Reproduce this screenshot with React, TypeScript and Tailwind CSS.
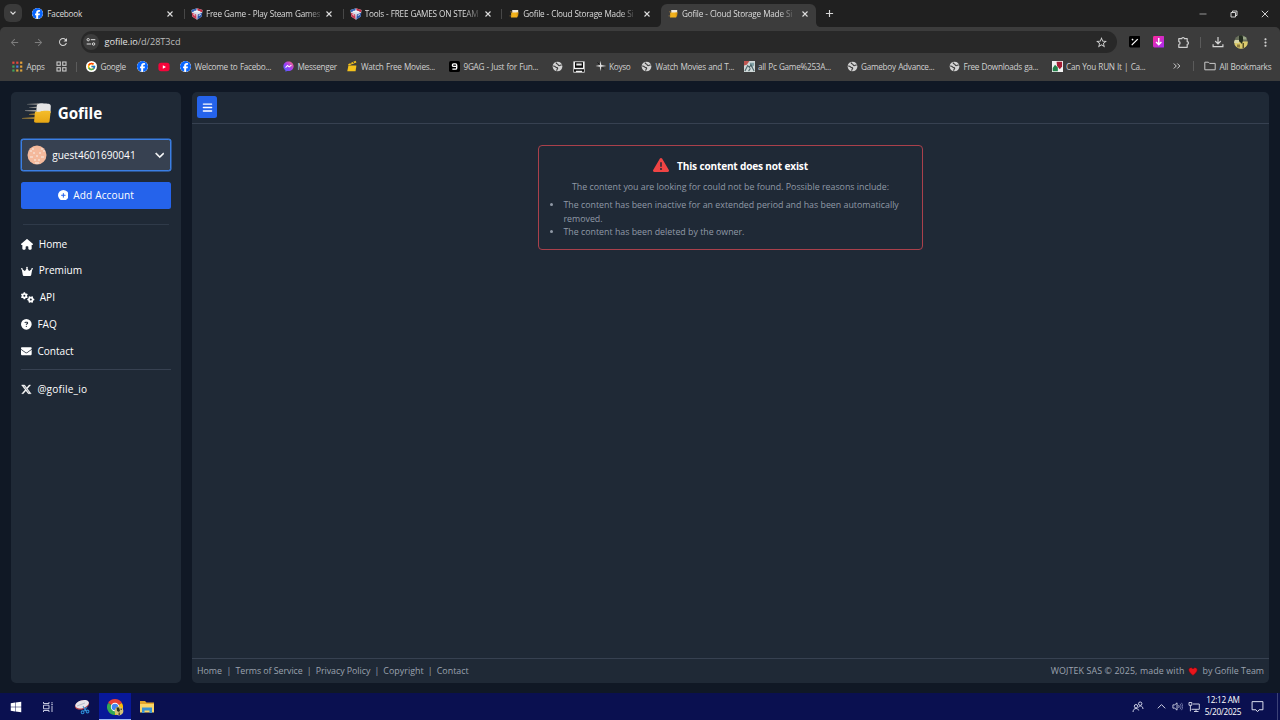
import React from "react";
import {
  FaHouse, FaCrown, FaGears, FaCircleQuestion, FaEnvelope, FaXTwitter, FaCirclePlus,
  FaBars, FaTriangleExclamation, FaChevronDown, FaFacebook, FaWindows,
} from "react-icons/fa6";
import { FcGoogle } from "react-icons/fc";
import { MdArrowBack, MdArrowForward, MdRefresh, MdStarBorder, MdMoreVert } from "react-icons/md";

const Facebook = () => <FaFacebook className="size-[11px] rounded-full bg-white text-[#0866ff]" />;

const Shield = () => (
  <svg viewBox="0 0 12 12" className="size-[12px]">
    <path d="M.5 2 6 .3 11.500 2 10.700 8.600 6 11.800 1.300 8.600Z" fill="#d8ddea" />
    <path d="M.5 2 6 .3 5 2.600 1 4.200Z" fill="#2f62b8" />
    <path d="M6 .3 11.500 2 11 4.200 6.800 2.600Z" fill="#c62b42" />
    <path d="M.8 4.800 5.200 6.400 5.600 11.500 1.300 8.600Z" fill="#c83a55" />
    <path d="M11.200 4.800 6.800 6.400 6.400 11.500 10.700 8.600Z" fill="#2855a8" />
    <path d="M2.500 6.500 4.200 7.200M7.800 7.400 9.800 6.500M3 3.300 9 3.900" fill="none" stroke="#f4f6fa" strokeWidth="1" />
  </svg>
);

const Mug = () => (
  <svg viewBox="0 0 12 12" className="size-[12px]">
    <path d="M4.200 2h6v3h-6z" fill="#f0e9da" />
    <path d="M3.200 4.600h6.600l-.6 5H3Z" fill="#f2b21b" />
    <path d="M8.600 4.600h2L10 8.400H8.800z" fill="#dc9912" />
    <path d="M1.500 7.900h2.200M2 3.800h2.400" stroke="#b78a3e" strokeWidth=".6" />
  </svg>
);

const Globe = () => (
  <svg viewBox="0 0 12 12" className="size-[11px]">
    <circle cx="6" cy="6" r="5.300" fill="#d2d2d2" />
    <path d="M1.200 5.400c1.400 0 2.200.4 3 1.300.7.8 1.800.3 2 1.200.1.9-1.200 1.100-1.100 2.700M4.600 1.600c-.3 1.400.6 1.500 1.300 1.700 1 .3.500 1.700 1.800 1.800 1.400.1 1.400-1 2.900-.6" fill="none" stroke="#3c3c3c" strokeWidth="1.200" />
  </svg>
);

const AppsGrid = () => {
  const colors = ["#e5493d", "#e5493d", "#e8a33b", "#3fa45b", "#4a7fe0", "#e8a33b", "#3fa45b", "#d9a33c", "#d9a33c"];
  return (
    <svg viewBox="0 0 11 11" className="size-[11px]">
      {colors.map((c, i) => (
        <rect key={i} x={0.3 + (i % 3) * 3.9} y={0.6 + Math.floor(i / 3) * 3.9} width="2.200" height="2.200" fill={c} />
      ))}
    </svg>
  );
};

const FourSquares = () => (
  <svg viewBox="0 0 11 11" className="size-[11px]" fill="none" stroke="#c9c9c9" strokeWidth="1.100">
    <rect x="1" y="1" width="3.300" height="3.300" /><rect x="6.700" y="1" width="3.300" height="3.300" />
    <rect x="1" y="6.700" width="3.300" height="3.300" /><rect x="6.700" y="6.700" width="3.300" height="3.300" />
  </svg>
);

const YouTube = () => (
  <svg viewBox="0 0 12 12" className="size-[12px]">
    <rect x=".4" y="1.800" width="11.200" height="8.400" rx="2.600" fill="#f5043a" />
    <path d="M4.800 4.300 8 6 4.800 7.700Z" fill="#fff" />
  </svg>
);

const Messenger = () => (
  <svg viewBox="0 0 12 12" className="size-[11px]">
    <defs>
      <linearGradient id="msg" x1="0" y1="1" x2="1" y2="0">
        <stop offset="0" stopColor="#3b6dff" /><stop offset=".5" stopColor="#a13bf5" /><stop offset="1" stopColor="#ff6a6f" />
      </linearGradient>
    </defs>
    <path d="M6 .6c3.200 0 5.600 2.300 5.600 5.200S9.200 11 6 11c-.6 0-1.100 0-1.600-.2l-1.700.8-.1-1.500C1.200 9.200.4 7.700.4 5.800.4 2.900 2.800.6 6 .6Z" fill="url(#msg)" />
    <path d="M2.800 7.200 4.900 4.900 6.700 6.400 9.200 4.500" fill="none" stroke="#fff" strokeWidth="1.100" />
  </svg>
);

const Clapper = () => (
  <svg viewBox="0 0 12 12" className="size-[12px]">
    <path d="M1.400 5.500h8l-.8 5.800H.3Z" fill="#f4c21c" />
    <path d="m1 4.200 7.600-3.400.8 1.800L1.800 5.400Z" fill="#f4c21c" />
    <path d="m3.300 3.100 1.300 1M5.900 2l1.300 1" stroke="#3c3c3c" strokeWidth=".8" />
  </svg>
);

const NineGag = () => (
  <svg viewBox="0 0 12 12" className="size-[11px]">
    <rect width="12" height="12" rx="2" fill="#000" />
    <path d="M8.400 5.900H5.300C4 5.900 3.700 5.300 3.700 4.500c0-.9.6-1.300 1.400-1.300h2c.8 0 1.300.4 1.300 1.300v3.100c0 .9-.5 1.300-1.300 1.300H3.700" fill="none" stroke="#fff" strokeWidth="1.500" />
  </svg>
);

const Cabinet = () => (
  <svg viewBox="0 0 12 12" className="size-[12px]">
    <rect x=".4" y=".4" width="11.200" height="11.200" fill="#f4f4f4" />
    <path d="M2 1.200h8v5.600H2Z" fill="#0a0a0a" /><path d="M3.300 2.500h5.400v2H3.300Z" fill="#e8e8e8" />
    <path d="M1 8.300h10v1.500H1ZM1 9.500h2v1.200H1ZM9 9.500h2v1.200H9Z" fill="#0a0a0a" />
  </svg>
);

const Spark = () => (
  <svg viewBox="0 0 12 12" className="size-[12px]">
    <path d="M5.600.8 6.300 5l5.100.9-5.100.8-.7 4.500-.8-4.500L.6 6l4.200-1Z" fill="#e0e0e0" />
    <path d="m2.500 2.500 2 2M7 7.500l1.800 1.800" stroke="#161616" strokeWidth="1" />
  </svg>
);

const PcPicture = () => (
  <svg viewBox="0 0 12 12" className="size-[11px]">
    <rect width="12" height="12" fill="#cfd8d8" />
    <path d="M0 0h6L3 4 0 5z" fill="#bd5550" /><path d="M6 2h5v3l-3 2z" fill="#7fa0a5" />
    <path d="m1 11 3-6 2 2 1.500-3L11 11M5 11l2-3" fill="none" stroke="#4c6468" strokeWidth="1.200" />
  </svg>
);

const CanRun = () => (
  <svg viewBox="0 0 12 12" className="size-[11px]">
    <rect width="12" height="12" fill="#f2f2f2" />
    <path d="M.8 11.200V7.500l2.500-3.500L6.400 7v4.200Z" fill="#23814a" />
    <path d="M5 .8h6V6L8.500 9 5.500 5.500Z" fill="#a31d35" />
  </svg>
);

const Folder = () => (
  <svg viewBox="0 0 12 12" className="size-[12px]" fill="none" stroke="#c9c9c9" strokeWidth="1">
    <path d="M.8 2.200h3.600l1.200 1.200h5.600v6.400H.8Z" strokeLinejoin="round" />
  </svg>
);

const Close = () => (
  <svg viewBox="0 0 8 8" className="size-[8px] shrink-0" stroke="#dedede" strokeWidth="1.100"><path d="m1.500 1.500 5 5m0-5-5 5" /></svg>
);

function Tab({ icon, title, active, divider }: { icon: React.ReactNode; title: string; active?: boolean; divider?: boolean }) {
  return (
    <div className={active
      ? "relative flex h-[23px] w-[155px] items-center rounded-t-[6px] bg-[#3c3c3c] pr-[7px] pb-[4px] pl-[6px]"
      : "relative flex h-[23px] w-[158.700px] items-center pr-[10.500px] pb-[4px] pl-[6px]"}>
      <span className="flex w-[15px] shrink-0">{icon}</span>
      <span className={title === "Facebook"
        ? "mt-px text-[8.200px] tracking-[-0.200px] whitespace-nowrap text-[#dcdcdc]"
        : "mt-px text-[8.200px] tracking-[-0.220px] whitespace-nowrap text-[#dcdcdc] [word-spacing:0.300px] [mask-image:linear-gradient(to_right,#000_88%,transparent_104%)]"}>{title}</span>
      <span className="ml-auto"><Close /></span>
      {divider && <span className="absolute top-[5px] right-0 h-[10px] w-px bg-[#474747]" />}
      {active && (
        <>
          <svg viewBox="0 0 5 5" className="absolute bottom-0 -left-[5px] size-[5px]"><path d="M5 0v5H0c3 0 5-2 5-5Z" fill="#3c3c3c" /></svg>
          <svg viewBox="0 0 5 5" className="absolute -right-[5px] bottom-0 size-[5px]"><path d="M0 0v5h5C2 5 0 3 0 0Z" fill="#3c3c3c" /></svg>
        </>
      )}
    </div>
  );
}

const bookmarks: { w: string; icon: React.ReactNode; label?: string }[] = [
  { w: "w-[43.500px]", icon: <AppsGrid />, label: "Apps" },
  { w: "w-[20px]", icon: <FourSquares /> },
  { w: "w-[10.500px]", icon: <span className="h-[10px] w-px bg-[#5b5b5b]" /> },
  { w: "w-[51px]", icon: <FcGoogle className="size-[11px] rounded-full bg-white p-[1px]" />, label: "Google" },
  { w: "w-[21px]", icon: <Facebook /> },
  { w: "w-[22px]", icon: <YouTube /> },
  { w: "w-[103px]", icon: <Facebook />, label: "Welcome to Facebo..." },
  { w: "w-[63.500px]", icon: <Messenger />, label: "Messenger" },
  { w: "w-[102.500px]", icon: <Clapper />, label: "Watch Free Movies..." },
  { w: "w-[103px]", icon: <NineGag />, label: "9GAG - Just for Fun..." },
  { w: "w-[20.500px]", icon: <Globe /> },
  { w: "w-[22px]", icon: <Cabinet /> },
  { w: "w-[46.500px]", icon: <Spark />, label: "Koyso" },
  { w: "w-[102.500px]", icon: <Globe />, label: "Watch Movies and T..." },
  { w: "w-[103px]", icon: <PcPicture />, label: "all Pc Game%253A..." },
  { w: "w-[102.500px]", icon: <Globe />, label: "Gameboy Advance..." },
  { w: "w-[102.500px]", icon: <Globe />, label: "Free Downloads ga..." },
  { w: "w-[106px]", icon: <CanRun />, label: "Can You RUN It | Ca..." },
];

function Browser() {
  return (
    <header className="flex h-[81px] shrink-0 flex-col bg-[#202020]">
      <div className="flex h-[27px] items-end">
        <div className="mb-[5px] ml-[4px] flex size-[18px] items-center justify-center rounded-[6px] bg-[#3a3a3a]">
          <svg viewBox="0 0 8 8" className="size-[8px]" fill="none" stroke="#e2e2e2" strokeWidth="1.200"><path d="m1.500 2.700 2.500 2.500 2.500-2.500" /></svg>
        </div>
        <div className="ml-[4.300px] flex">
          <Tab icon={<Facebook />} title="Facebook" divider />
          <Tab icon={<Shield />} title="Free Game - Play Steam Games" divider />
          <Tab icon={<Shield />} title="Tools - FREE GAMES ON STEAM" divider />
          <Tab icon={<Mug />} title="Gofile - Cloud Storage Made Si" />
          <Tab icon={<Mug />} title="Gofile - Cloud Storage Made Si" active />
        </div>
        <svg viewBox="0 0 8 8" className="mb-[9px] ml-[8.500px] size-[9px]" stroke="#d6d6d6" strokeWidth="1"><path d="M4 .8v6.400M.8 4h6.400" /></svg>
        <div className="mb-[9px] ml-auto flex items-center gap-[23px] pr-[11.500px]">
          <svg viewBox="0 0 8 8" className="size-[8px]" stroke="#b5b5b5" strokeWidth=".8"><path d="M.5 4h7" /></svg>
          <svg viewBox="0 0 8 8" className="size-[8px]" fill="none" stroke="#e4e4e4" strokeWidth=".9"><path d="M1 2.500h4.500V7H1ZM2.500 2.300V1H7v4.500H5.700" /></svg>
          <svg viewBox="0 0 8 8" className="size-[8px]" stroke="#e4e4e4" strokeWidth=".9"><path d="m.8.800 6.400 6.400m0-6.400L.8 7.200" /></svg>
        </div>
      </div>
      <div className="flex h-[29px] items-center rounded-t-[5px] bg-[#3c3c3c] pt-px">
        <div className="flex w-[81px] items-center gap-[13px] pl-[9px] text-[#7d7d7d]">
          <MdArrowBack className="size-[11px]" /><MdArrowForward className="size-[11px]" /><MdRefresh className="size-[12px] text-[#d5d5d5]" />
        </div>
        <div className="flex h-[22px] w-[1036px] items-center rounded-full bg-[#282828] pr-[9.500px] pl-[2px]">
          <span className="flex size-[16px] items-center justify-center rounded-full bg-[#3c3c3c]">
            <svg viewBox="0 0 10 10" className="size-[10px]" fill="none" stroke="#dedede" strokeWidth="1"><circle cx="2.200" cy="2.700" r="1.200" /><path d="M4.800 2.700h4.500M.7 7h4.500" /><circle cx="7.600" cy="7" r="1.200" /></svg>
          </span>
          <span className="ml-[5.500px] text-[9.200px] tracking-[-0.050px] text-[#e3e3e3]">gofile.io<span className="text-[#bcbcbc]">/d/28T3cd</span></span>
          <MdStarBorder className="ml-auto size-[13px] text-[#d3d3d3]" />
        </div>
        <div className="flex flex-1 items-center pl-[11.500px]">
          <svg viewBox="0 0 12 12" className="size-[11.500px]"><rect width="12" height="12" rx="1.500" fill="#000" /><path d="m3.300 9 5.800-5.800M3 3l1.400 1.400M3.600 8.700l-.8.800" stroke="#fff" strokeWidth="1.300" /></svg>
          <svg viewBox="0 0 12 12" className="ml-[12.500px] size-[11.500px]"><defs><linearGradient id="dl" x2="1" y2="1"><stop stopColor="#ff2a9b" /><stop offset="1" stopColor="#a42bf5" /></linearGradient></defs><rect width="12" height="12" rx="1.500" fill="url(#dl)" /><path d="M6 2v6.500M3.200 6.200 6 9l2.800-2.800" fill="none" stroke="#fff" strokeWidth="1.500" /></svg>
          <svg viewBox="0 0 13 13" className="ml-[13px] size-[13px]" fill="none" stroke="#cfcfcf" strokeWidth="1.200" strokeLinejoin="round"><path d="M1.800 2.700h3c0-1.600 2.600-1.600 2.600 0h2.800v3c1.700 0 1.700 2.600 0 2.600v3H1.800V8.500C3.500 8.300 3.500 5.800 1.800 5.600Z" /></svg>
          <span className="ml-[10px] h-[11px] w-px bg-[#5b5b5b]" />
          <svg viewBox="0 0 12 12" className="ml-[10.500px] size-[12px]" fill="none" stroke="#d3d3d3" strokeWidth="1.200"><path d="M6 1v6.600M3.200 5 6 7.800 8.800 5M1.100 8.200v2.500h9.800V8.200" /></svg>
          <svg viewBox="0 0 14 14" className="ml-[10.500px] size-[14px]">
            <defs><clipPath id="av"><circle cx="7" cy="7" r="6.800" /></clipPath></defs>
            <g clipPath="url(#av)"><rect width="14" height="14" fill="#69705c" /><rect y="6.500" width="14" height="8" fill="#dccb6c" /><path d="M5 0h3l1.500 3.500L8 9 5 6Z" fill="#222c1f" /><path d="M0 5h5v3H0z" fill="#d8d6a8" /><path d="M3 9.500h3v3H3z" fill="#8d7a3c" /><path d="M8.500 8h1.500v5H8.500z" fill="#5a5226" /><path d="M9 1.500h3.500v3H9z" fill="#9aa687" /></g>
          </svg>
          <MdMoreVert className="ml-[10.500px] size-[13px] text-[#cfcfcf]" />
        </div>
      </div>
      <div className="flex h-[25px] items-center bg-[#3c3c3c] pb-[4px] pl-[12px] text-[8.200px] tracking-[-0.270px] whitespace-nowrap text-[#d0d0d0] [word-spacing:0.500px]">
        {bookmarks.map((b, i) => (
          <div key={i} className={"flex shrink-0 items-center " + b.w}>
            <span className={b.label ? "flex w-[14.500px] shrink-0" : "flex"}>{b.icon}</span>
            {b.label && <span className="mt-px">{b.label}</span>}
          </div>
        ))}
        <div className="ml-[13px] flex items-center">
          <svg viewBox="0 0 8 8" className="mr-[12px] ml-[2px] size-[8px]" fill="none" stroke="#d3d3d3" strokeWidth="1"><path d="M.8 1.500 3.300 4 .8 6.500M4.300 1.500 6.800 4 4.300 6.500" /></svg>
          <span className="mr-[10px] h-[10px] w-px bg-[#5b5b5b]" />
          <Folder />
          <span className="mt-px ml-[4px] tracking-[-0.250px]">All Bookmarks</span>
        </div>
      </div>
    </header>
  );
}

const nav = [
  { icon: <FaHouse className="h-[10.700px] w-[12px]" />, label: "Home", gap: "gap-[5.500px]" },
  { icon: <FaCrown className="h-[10.700px] w-[12px]" />, label: "Premium", gap: "gap-[5.500px]" },
  { icon: <FaGears className="h-[11px] w-[13.500px]" />, label: "API", gap: "gap-[5px]" },
  { icon: <FaCircleQuestion className="size-[10.700px]" />, label: "FAQ", gap: "gap-[5.500px]" },
  { icon: <FaEnvelope className="size-[10.700px]" />, label: "Contact", gap: "gap-[5.500px]" },
];

function Sidebar() {
  return (
    <aside className="flex w-[170px] shrink-0 flex-col rounded-[5px] bg-[#1f2936] pr-[10.500px] pl-[10.200px] text-[10.100px] text-white">
      <div className="mt-[8px] flex h-[27px] items-center">
        <svg viewBox="0 0 30 22" className="h-[22px] w-[30px]">
          <defs><linearGradient id="beer" x2="0" y2="1"><stop stopColor="#f4bd2c" /><stop offset="1" stopColor="#e7a613" /></linearGradient></defs>
          <path d="M16 2c2-1 5-.8 7-.4 3 .2 6.500-.2 6.800 2.400L29.500 11H15Z" fill="#e4e4e4" />
          <path d="M14 9.500c2.500 0 3.600.8 5.500 0s6.500-.8 10.200-.3L28.500 19.500c-.3 1-1 1.200-2 1.200H15c-1.500 0-2-.6-1.900-1.600Z" fill="url(#beer)" />
          <path d="M6 1.900 17 1.600v1.200L6 2.300ZM8 5.200l8-.4V6L8 5.600ZM4 8.500l11-.4v1.300L4 8.900Z" fill="#a9a7a2" />
          <path d="m8 12 6-.5v1.200l-6-.3ZM1 16l13-.7v1.400L1 16.400Z" fill="#c79a37" />
        </svg>
        <span className="mt-px ml-[6.500px] text-[15.200px] font-bold">Gofile</span>
      </div>
      <div className="mt-[12.500px] flex h-[32px] items-center rounded-[2.500px] border-[1.500px] border-[#3b7fe4] bg-[#374151] pr-[5.500px] pl-[5px] shadow-[0_0_0_0.5px_#3b7fe4]">
        <svg viewBox="0 0 20 20" className="size-[20px]">
          <circle cx="10" cy="10" r="9.500" fill="#f4b99c" />
          <path d="M3 6h2M5 4h2M14 4h2M16 6h2M6 8h2M12 8h2M3 12h3M14 12h3M7 15h2M11 15h2M8 18h4M9 11h2" stroke="#f6dccd" strokeWidth="1.400" />
        </svg>
        <span className="mt-px ml-[5px]">guest4601690041</span>
        <FaChevronDown className="ml-auto size-[9.500px] stroke-white stroke-[30]" />
      </div>
      <div className="mt-[10.500px] flex h-[27px] items-center justify-center gap-[5px] rounded-[2.500px] bg-[#2563eb]">
        <FaCirclePlus className="size-[10.700px]" />
        <span className="mt-px tracking-[0.120px]">Add Account</span>
      </div>
      <div className="mx-[2px] mt-[15.500px] h-px bg-[#2f3a49]" />
      <nav className="mt-[6px] flex flex-col">
        {nav.map((n) => (
          <div key={n.label} className={"flex h-[26.700px] items-center " + n.gap}>{n.icon}<span>{n.label}</span></div>
        ))}
      </nav>
      <div className="mt-[5px] h-px bg-[#374151]" />
      <div className="mt-[6px] flex h-[26px] items-center gap-[5.500px]"><FaXTwitter className="size-[10.700px] stroke-white stroke-[20]" /><span className="tracking-[0.200px]">@gofile_io</span></div>
    </aside>
  );
}

function Content() {
  return (
    <main className="flex flex-1 flex-col rounded-[5px] bg-[#1f2936]">
      <div className="flex h-[32px] items-center border-b border-[#374151] pl-[5px]">
        <div className="flex h-[21.500px] w-[20px] items-center justify-center rounded-[2.500px] bg-[#2563eb]"><FaBars className="size-[11px] text-white" /></div>
      </div>
      <div className="flex-1">
        <section className="mx-auto mt-[21px] flex h-[105px] w-[384.500px] flex-col rounded-[4px] border border-[#aa404b] px-[11px] pt-[10px] text-[8.830px] leading-[13.300px] text-[#9099a6]">
          <div className="flex h-[19px] items-center justify-center gap-[8px] text-[10.100px] font-bold tracking-[-0.180px] text-white">
            <FaTriangleExclamation className="size-[16px] text-[#ef4444]" />
            <h1 className="mt-[3px]">This content does not exist</h1>
          </div>
          <p className="mt-[6px] text-center">The content you are looking for could not be found. Possible reasons include:</p>
          <ul className="mt-[5.500px] list-disc pl-[13.200px]">
            <li>The content has been inactive for an extended period and has been automatically<br />removed.</li>
            <li>The content has been deleted by the owner.</li>
          </ul>
        </section>
      </div>
      <footer className="flex h-[25.500px] items-center border-t border-[#374151] px-[5px] pt-[1.500px] text-[8.850px] text-[#9ca3af]">
        <nav className="flex gap-[4.100px] tracking-[-0.050px]">
          <span className="w-[25.500px]">Home</span><span>|</span><span>Terms of Service</span><span>|</span><span>Privacy Policy</span><span>|</span><span className="tracking-[0.050px]">Copyright</span><span>|</span><span className="tracking-[0.050px]">Contact</span>
        </nav>
        <div className="ml-auto flex items-center gap-[4px]">
          <span className="tracking-[0.120px]">WOJTEK SAS © 2025, made with</span>
          <svg viewBox="0 0 12 11" className="h-[9px] w-[10px]"><path d="M6 10.300C3 8 .8 6 .8 3.500.8 1.800 2 .8 3.400.8 4.500.8 5.500 1.400 6 2.400 6.500 1.400 7.500.8 8.600.8 10 .8 11.200 1.800 11.200 3.500 11.200 6 9 8 6 10.300Z" fill="#e8151b" stroke="#650d16" strokeWidth=".7" /></svg>
          <span>by Gofile Team</span>
        </div>
      </footer>
    </main>
  );
}

function Taskbar() {
  return (
    <footer className="flex h-[27px] shrink-0 items-center bg-[#0a1050] text-white">
      <div className="flex w-[32px] justify-center"><FaWindows className="size-[12px]" /></div>
      <div className="flex w-[32px] justify-center">
        <svg viewBox="0 0 12 12" className="size-[12px]" fill="none" stroke="#d9dcee" strokeWidth=".9"><path d="M1.500 1v1.500h5.500V1M1.500 11V9.500h5.500V11M1.500 4.200H7v3.600H1.500ZM10 1v1.500M10 5v6M9.200 3.700h1.700" /></svg>
      </div>
      <div className="flex w-[35px] justify-center">
        <svg viewBox="0 0 18 16" className="h-[16px] w-[18px]">
          <ellipse cx="9" cy="6" rx="7.300" ry="4.400" transform="rotate(-18 9 6)" fill="#b6404a" />
          <ellipse cx="9" cy="5.200" rx="7" ry="3.900" transform="rotate(-18 9 5)" fill="#e9e5ea" />
          <path d="m4 7 8-3M10 7l3 5" stroke="#b9bdca" />
          <g fill="none" stroke="#2c8bd4" strokeWidth="1.100"><path d="m10 7.500 4 5M14 8l-3.500 4.500" /><circle cx="9.600" cy="13.300" r="1.400" /><circle cx="14.500" cy="12.500" r="1.400" /></g>
        </svg>
      </div>
      <div className="flex h-full w-[32px] items-center justify-center border-b-[1.500px] border-[#9fb8f4] bg-[#081899] pt-px">
        <svg viewBox="0 0 18 18" className="size-[18px]">
          <path d="M9 9 2.070 5A8 8 0 0 1 15.930 5Z" fill="#e94235" />
          <path d="M9 9 2.070 5A8 8 0 0 0 9 17Z" fill="#34a853" />
          <path d="M9 9 15.930 5A8 8 0 0 1 9 17Z" fill="#fbbc04" />
          <circle cx="9" cy="9" r="4.200" fill="#fff" /><circle cx="9" cy="9" r="3.300" fill="#4285f4" />
          <circle cx="13" cy="13" r="4.400" fill="#d3c376" /><path d="M10.500 9.500h2.500l1 3-1 1.500-2-1Z" fill="#2b3522" /><path d="M12.500 14.500H14v2.500h-1.500zM14.500 10.500H16v1.500h-1.500z" fill="#5f572f" />
        </svg>
      </div>
      <div className="flex w-[32px] justify-center">
        <svg viewBox="0 0 16 14" className="h-[14px] w-[16px]"><path d="M1 1h5l1.500 1.500H15V12H1Z" fill="#e3a72c" /><path d="M1 4h14v8.500H1Z" fill="#fbd667" /><path d="M3 7.500h10V13h-2.500v-2.500h-5V13H3Z" fill="#3a93d3" /></svg>
      </div>
      <div className="ml-auto flex h-full items-center">
        <svg viewBox="0 0 12 12" className="mr-[13px] size-[12px]" fill="none" stroke="#dde0f0" strokeWidth=".9"><circle cx="4" cy="5.200" r="1.700" /><path d="M1 11c.2-2.400 1.400-3.500 3-3.500S6.300 8.300 6.700 9.500" /><circle cx="8.200" cy="2.700" r="1.700" /><path d="M6.500 6.500C7 5.300 7.600 5 8.500 5c1.500 0 2.300 1.200 2.500 3" /></svg>
        <svg viewBox="0 0 9 9" className="mr-[6px] size-[9px]" fill="none" stroke="#e6e8f4" strokeWidth=".9"><path d="m.8 6.300 3.700-3.700 3.700 3.700" /></svg>
        <svg viewBox="0 0 12 12" className="mr-[5px] size-[11px]" fill="none" stroke="#dfe2f1" strokeWidth=".9"><path d="M1 4.200h2L5.500 2v8L3 7.800H1ZM7.200 4.500c.7 1 .7 2 0 3" /><path d="M8.800 3c1.400 2 1.400 4 0 6M10.300 2c1.900 2.600 1.900 5.400 0 8" stroke="#7f86b4" /></svg>
        <svg viewBox="0 0 12 12" className="mr-[4.500px] size-[12px]" fill="none" stroke="#dfe2f1" strokeWidth=".9"><path d="M4.800 3h6.500v5.300H3.500M6 10.500h4.500M8 8.500v2M1 1.500h2.800v2.800H1ZM2.400 4.300v6" /></svg>
        <div className="-mt-[0.500px] w-[37px] text-center text-[8.200px] leading-[12px] tracking-[-0.280px] whitespace-nowrap"><div>12:12 AM</div><div>5/20/2025</div></div>
        <svg viewBox="0 0 12 12" className="ml-[9.500px] size-[13px]" fill="none" stroke="#dfe2f1" strokeWidth=".9"><path d="M1 1.500h10V9H7.500L6 10.800 4.500 9H1Z" /></svg>
        <span className="mr-[2.500px] ml-[12.500px] h-full w-px bg-[#3c4277]" />
      </div>
    </footer>
  );
}

export default function App() {
  return (
    <div className="flex h-[720px] w-[1280px] flex-col overflow-hidden bg-[#101825] font-['Open_Sans','Noto_Sans',sans-serif]">
      <Browser />
      <div className="flex min-h-0 flex-1 gap-[11px] px-[11px] pt-[10.500px] pb-[10px]">
        <Sidebar />
        <Content />
      </div>
      <Taskbar />
    </div>
  );
}
